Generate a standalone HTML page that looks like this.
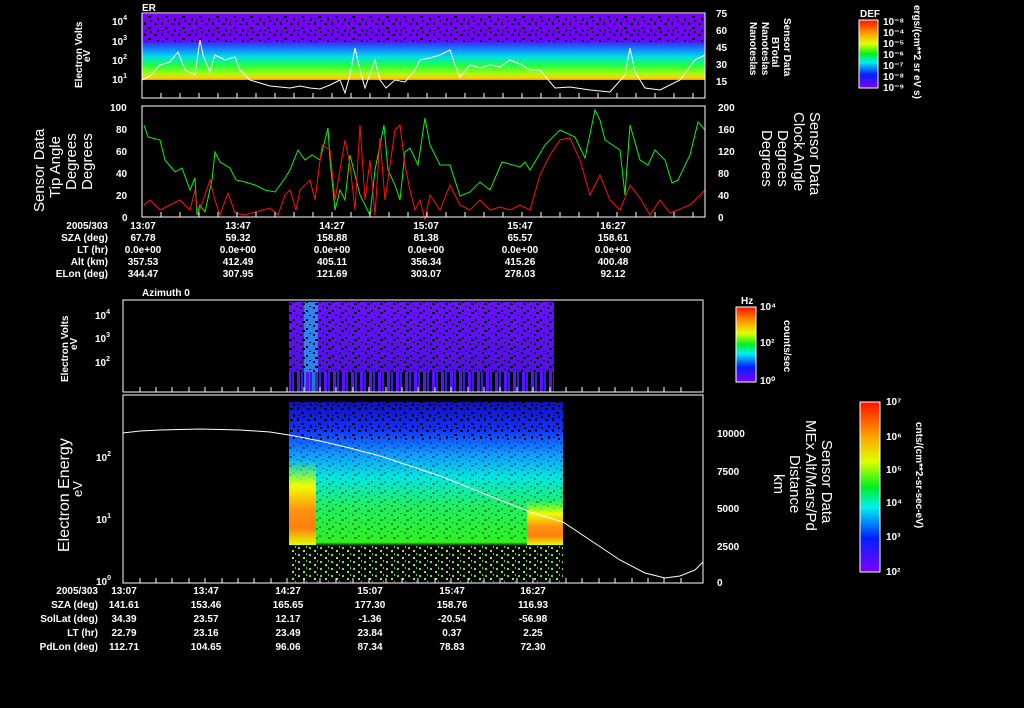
<!DOCTYPE html>
<html><head><meta charset="utf-8"><style>
html,body{margin:0;padding:0;background:#000;width:1024px;height:708px;overflow:hidden}
svg{display:block}
text{font-family:"Liberation Sans",sans-serif;fill:#fff}
.s{font-size:10px;font-weight:bold}
</style></head><body>
<svg width="1024" height="708" viewBox="0 0 1024 708" xmlns="http://www.w3.org/2000/svg">
<defs>
<linearGradient id="g1" x1="0" y1="0" x2="0" y2="1">
<stop offset="0" stop-color="#7a00ff"/><stop offset="0.40" stop-color="#7000ff"/>
<stop offset="0.45" stop-color="#2a40ff"/><stop offset="0.55" stop-color="#1090ff"/>
<stop offset="0.65" stop-color="#00e0e0"/><stop offset="0.78" stop-color="#20ff40"/>
<stop offset="0.9" stop-color="#a0ff10"/><stop offset="0.97" stop-color="#ffd000"/><stop offset="1" stop-color="#ff9000"/>
</linearGradient>
<linearGradient id="g4" x1="0" y1="0" x2="0" y2="1">
<stop offset="0" stop-color="#1010c0"/><stop offset="0.15" stop-color="#1030ff"/>
<stop offset="0.3" stop-color="#10a0ff"/><stop offset="0.42" stop-color="#00e8e0"/>
<stop offset="0.58" stop-color="#20f060"/><stop offset="0.78" stop-color="#30f020"/>
<stop offset="0.8" stop-color="#000"/><stop offset="1" stop-color="#000"/>
</linearGradient>
<linearGradient id="go" x1="0" y1="0" x2="0" y2="1">
<stop offset="0" stop-color="#80ff20" stop-opacity="0"/><stop offset="0.3" stop-color="#f0ff00"/>
<stop offset="0.6" stop-color="#ff9010"/><stop offset="0.8" stop-color="#ff8010"/><stop offset="1" stop-color="#e0ff00"/>
</linearGradient>
<linearGradient id="g3" x1="0" y1="0" x2="0" y2="1">
<stop offset="0" stop-color="#6a10ff"/><stop offset="1" stop-color="#5010e0"/>
</linearGradient>
<linearGradient id="cb" x1="0" y1="0" x2="0" y2="1">
<stop offset="0" stop-color="#ff1000"/><stop offset="0.2" stop-color="#ffa000"/>
<stop offset="0.35" stop-color="#e0ff00"/><stop offset="0.5" stop-color="#00f020"/>
<stop offset="0.62" stop-color="#00f0f0"/><stop offset="0.8" stop-color="#0020ff"/><stop offset="1" stop-color="#8000ff"/>
</linearGradient>
<pattern id="nz" width="17" height="11" patternUnits="userSpaceOnUse">
<rect x="1" y="1" width="3" height="2" fill="#000"/><rect x="8" y="0" width="2" height="3" fill="#000"/>
<rect x="12" y="5" width="3" height="2" fill="#000"/><rect x="4" y="7" width="2" height="3" fill="#000"/>
<rect x="14" y="9" width="2" height="2" fill="#000"/><rect x="9" y="8" width="2" height="1" fill="#000"/>
</pattern>
<pattern id="nz2" width="13" height="9" patternUnits="userSpaceOnUse">
<rect x="1" y="1" width="2" height="2" fill="#000"/><rect x="7" y="4" width="2" height="2" fill="#000"/>
<rect x="10" y="0" width="2" height="1" fill="#000"/><rect x="3" y="6" width="3" height="2" fill="#000"/>
</pattern>
<pattern id="gs" width="11" height="7" patternUnits="userSpaceOnUse">
<rect x="1" y="1" width="2" height="2" fill="#60f020"/><rect x="6" y="4" width="2" height="2" fill="#a0f020"/>
<rect x="9" y="0" width="1" height="2" fill="#40e030"/>
</pattern>
<pattern id="st" width="9" height="20" patternUnits="userSpaceOnUse">
<rect x="0" y="0" width="3" height="20" fill="#6010ff"/><rect x="4" y="0" width="2" height="20" fill="#3020f0"/>
</pattern>
</defs>

<!-- Panel 1 -->
<rect x="142" y="14" width="563" height="66" fill="url(#g1)"/>
<rect x="142" y="14" width="563" height="28" fill="url(#nz)"/>
<polyline fill="none" stroke="#fff" stroke-width="1" points="142,80 150,76 160,65 170,62 178,52 185,70 195,75 200,40 203,55 210,72 215,55 225,60 235,57 240,70 250,80 260,83 270,86 280,87 290,88 300,86 310,88 320,89 330,85 340,80 345,93 350,75 355,48 360,70 365,88 375,60 380,80 386,88 395,80 405,82 415,70 420,60 430,58 440,55 450,50 455,65 460,77 470,65 480,68 490,65 500,67 510,60 520,64 530,70 540,70 555,88 570,87 590,90 610,92 625,75 630,48 635,72 645,88 660,90 680,80 695,60 705,55"/>
<rect x="142" y="13" width="563" height="85" fill="none" stroke="#fff"/>
<path stroke="#fff" fill="none" d="M161,98v-5M180,98v-5M199,98v-5M218,98v-5M237,98v-5M256,98v-5M275,98v-5M294,98v-5M313,98v-5M332,98v-5M351,98v-5M370,98v-5M389,98v-5M408,98v-5M427,98v-5M446,98v-5M465,98v-5M484,98v-5M503,98v-5M522,98v-5M541,98v-5M560,98v-5M579,98v-5M598,98v-5M617,98v-5M636,98v-5M655,98v-5M674,98v-5M693,98v-5"/>
<text x="142" y="11" class="s">ER</text>
<g class="s" font-size="10"><text x="112" y="25">10<tspan font-size="7" dy="-5">4</tspan></text><text x="112" y="45">10<tspan font-size="7" dy="-5">3</tspan></text><text x="112" y="64">10<tspan font-size="7" dy="-5">2</tspan></text><text x="112" y="83">10<tspan font-size="7" dy="-5">1</tspan></text></g>
<text transform="translate(82,88) rotate(-90)" class="s" font-size="9">Electron Volts</text>
<text transform="translate(90,62) rotate(-90)" class="s" font-size="9">eV</text>
<g class="s" font-size="12"><text x="716" y="17">75</text><text x="716" y="34">60</text><text x="716" y="51">45</text><text x="716" y="68">30</text><text x="716" y="85">15</text></g>
<g class="s" font-size="11" font-family="Liberation Mono"><text transform="translate(784,18) rotate(90)">Sensor Data</text><text transform="translate(772,37) rotate(90)">BTotal</text><text transform="translate(762,22) rotate(90)">Nanoteslas</text><text transform="translate(750,22) rotate(90)">Nanoteslas</text></g>
<rect x="859" y="20" width="19" height="68" fill="url(#cb)" stroke="#fff"/>
<text x="860" y="17" class="s" font-size="8">DEF</text>
<g class="s" font-size="7"><text x="883" y="25">10⁻⁸</text><text x="883" y="36">10⁻⁴</text><text x="883" y="47">10⁻⁵</text><text x="883" y="58">10⁻⁶</text><text x="883" y="69">10⁻⁷</text><text x="883" y="80">10⁻⁸</text><text x="883" y="91">10⁻⁹</text></g>
<text transform="translate(914,5) rotate(90)" class="s" font-size="8">ergs/(cm**2 sr eV s)</text>

<!-- Panel 2 -->
<polyline fill="none" stroke="#10f010" stroke-width="1" points="144,125 148,137 160,140 165,160 175,172 182,168 190,190 195,178 197,215 200,205 205,212 212,180 215,152 220,162 230,168 236,180 245,182 255,185 265,190 275,192 285,178 290,170 298,150 305,160 312,155 320,160 328,128 330,160 335,210 340,190 345,200 350,155 355,175 360,195 370,215 375,170 384,125 388,170 395,185 400,200 405,152 410,148 418,165 425,118 430,145 440,165 450,165 460,196 470,192 480,182 490,190 502,162 520,167 525,162 530,170 545,145 560,130 575,137 585,158 595,110 600,120 605,140 620,150 625,195 630,125 640,160 648,165 655,150 665,160 672,183 678,180 690,155 698,122 705,130"/>
<polyline fill="none" stroke="#ff1010" stroke-width="1" points="144,205 150,200 160,210 170,205 180,200 190,210 195,190 198,215 205,195 210,180 215,200 220,215 228,193 235,213 245,215 255,212 270,208 278,215 285,195 290,190 296,210 300,190 310,180 315,200 322,145 330,150 335,200 345,140 350,165 355,210 360,125 365,200 370,160 375,215 380,138 385,200 395,130 400,125 405,165 410,190 415,210 420,200 425,220 430,195 440,210 450,185 460,205 470,210 480,200 490,210 500,207 510,210 520,205 530,210 540,175 550,155 560,140 570,138 580,160 590,195 600,175 610,200 620,210 630,185 640,198 650,215 660,200 670,213 690,205 705,190"/>
<rect x="142" y="106" width="563" height="111" fill="none" stroke="#fff"/>
<path stroke="#fff" fill="none" d="M161,217v-5M180,217v-5M199,217v-5M218,217v-5M237,217v-5M256,217v-5M275,217v-5M294,217v-5M313,217v-5M332,217v-5M351,217v-5M370,217v-5M389,217v-5M408,217v-5M427,217v-5M446,217v-5M465,217v-5M484,217v-5M503,217v-5M522,217v-5M541,217v-5M560,217v-5M579,217v-5M598,217v-5M617,217v-5M636,217v-5M655,217v-5M674,217v-5M693,217v-5"/>
<g class="s" font-size="12"><text x="110" y="111">100</text><text x="116" y="133">80</text><text x="116" y="155">60</text><text x="116" y="177">40</text><text x="116" y="199">20</text><text x="122" y="221">0</text></g>
<g class="s" font-size="12"><text x="718" y="111">200</text><text x="718" y="133">160</text><text x="718" y="155">120</text><text x="718" y="177">80</text><text x="718" y="199">40</text><text x="718" y="221">0</text></g>
<g font-size="15" font-family="Liberation Mono"><text transform="translate(44,212) rotate(-90)" fill="#ff1010">Sensor Data</text><text transform="translate(60,198) rotate(-90)" fill="#ff1010">Tip Angle</text><text transform="translate(76,190) rotate(-90)" fill="#ff1010">Degrees</text><text transform="translate(92,190) rotate(-90)" fill="#ff1010">Degrees</text></g>
<g font-size="15" font-family="Liberation Mono"><text transform="translate(810,112) rotate(90)" fill="#10f010">Sensor Data</text><text transform="translate(794,112) rotate(90)" fill="#10f010">Clock Angle</text><text transform="translate(778,130) rotate(90)" fill="#10f010">Degrees</text><text transform="translate(762,130) rotate(90)" fill="#10f010">Degrees</text></g>
<g class="s" font-size="10">
<text x="108" y="229" text-anchor="end">2005/303</text><text x="108" y="241" text-anchor="end">SZA (deg)</text><text x="108" y="253" text-anchor="end">LT (hr)</text><text x="108" y="265" text-anchor="end">Alt (km)</text><text x="108" y="277" text-anchor="end">ELon (deg)</text>
<g text-anchor="middle">
<text x="143" y="229">13:07</text><text x="143" y="241">67.78</text><text x="143" y="253">0.0e+00</text><text x="143" y="265">357.53</text><text x="143" y="277">344.47</text>
<text x="238" y="229">13:47</text><text x="238" y="241">59.32</text><text x="238" y="253">0.0e+00</text><text x="238" y="265">412.49</text><text x="238" y="277">307.95</text>
<text x="332" y="229">14:27</text><text x="332" y="241">158.88</text><text x="332" y="253">0.0e+00</text><text x="332" y="265">405.11</text><text x="332" y="277">121.69</text>
<text x="426" y="229">15:07</text><text x="426" y="241">81.38</text><text x="426" y="253">0.0e+00</text><text x="426" y="265">356.34</text><text x="426" y="277">303.07</text>
<text x="520" y="229">15:47</text><text x="520" y="241">65.57</text><text x="520" y="253">0.0e+00</text><text x="520" y="265">415.26</text><text x="520" y="277">278.03</text>
<text x="613" y="229">16:27</text><text x="613" y="241">158.61</text><text x="613" y="253">0.0e+00</text><text x="613" y="265">400.48</text><text x="613" y="277">92.12</text>
</g></g>

<!-- Panel 3 -->
<text x="142" y="296" class="s">Azimuth 0</text>
<rect x="289" y="302" width="265" height="70" fill="url(#g3)"/>
<rect x="304" y="302" width="14" height="90" fill="#20a0f0" opacity="0.8"/>
<rect x="289" y="372" width="265" height="20" fill="url(#st)"/>
<rect x="289" y="302" width="265" height="70" fill="url(#nz2)"/>
<rect x="123" y="300" width="580" height="92" fill="none" stroke="#fff"/>
<path stroke="#fff" fill="none" d="M140,392v-5M156,392v-5M172,392v-5M189,392v-5M205,392v-5M222,392v-5M238,392v-5M254,392v-5M271,392v-5M287,392v-5M304,392v-5M320,392v-5M336,392v-5M353,392v-5M369,392v-5M386,392v-5M402,392v-5M418,392v-5M435,392v-5M451,392v-5M468,392v-5M484,392v-5M500,392v-5M517,392v-5M533,392v-5M550,392v-5M566,392v-5M582,392v-5M599,392v-5M615,392v-5M632,392v-5M648,392v-5M664,392v-5M681,392v-5"/>
<g class="s" font-size="10"><text x="95" y="319">10<tspan font-size="7" dy="-5">4</tspan></text><text x="95" y="342">10<tspan font-size="7" dy="-5">3</tspan></text><text x="95" y="366">10<tspan font-size="7" dy="-5">2</tspan></text></g>
<text transform="translate(68,382) rotate(-90)" class="s" font-size="9">Electron Volts</text>
<text transform="translate(77,350) rotate(-90)" class="s" font-size="8">eV</text>
<rect x="736" y="307" width="20" height="75" fill="url(#cb)" stroke="#fff"/>
<text x="741" y="304" class="s" font-size="8">Hz</text>
<g class="s" font-size="7"><text x="760" y="310">10⁴</text><text x="760" y="346">10²</text><text x="760" y="384">10⁰</text></g>
<text transform="translate(784,320) rotate(90)" class="s" font-size="8">counts/sec</text>

<!-- Panel 4 -->
<rect x="289" y="402" width="274" height="180" fill="url(#g4)"/>
<rect x="289" y="402" width="274" height="38" fill="url(#nz)"/>
<rect x="289" y="440" width="274" height="100" fill="url(#nz2)" opacity="0.35"/>
<rect x="289" y="460" width="27" height="85" fill="url(#go)"/>
<rect x="527" y="500" width="36" height="45" fill="url(#go)"/>
<rect x="289" y="546" width="274" height="36" fill="url(#gs)"/>
<polyline fill="none" stroke="#fff" stroke-width="1" points="123,433 140,431 160,430 200,429 240,430 270,432 289,435 320,441 350,448 380,456 410,466 440,476 470,488 500,500 530,512 563,522 590,540 620,560 645,573 665,578 680,576 695,570 703,562"/>
<rect x="123" y="395" width="580" height="188" fill="none" stroke="#fff"/>
<path stroke="#fff" fill="none" d="M140,583v-5M156,583v-5M172,583v-5M189,583v-5M205,583v-5M222,583v-5M238,583v-5M254,583v-5M271,583v-5M287,583v-5M304,583v-5M320,583v-5M336,583v-5M353,583v-5M369,583v-5M386,583v-5M402,583v-5M418,583v-5M435,583v-5M451,583v-5M468,583v-5M484,583v-5M500,583v-5M517,583v-5M533,583v-5M550,583v-5M566,583v-5M582,583v-5M599,583v-5M615,583v-5M632,583v-5M648,583v-5M664,583v-5M681,583v-5"/>
<g class="s" font-size="11"><text x="96" y="461">10<tspan font-size="7" dy="-5">2</tspan></text><text x="96" y="523">10<tspan font-size="7" dy="-5">1</tspan></text><text x="96" y="585">10<tspan font-size="7" dy="-5">0</tspan></text></g>
<text transform="translate(69,552) rotate(-90)" font-size="16">Electron Energy</text>
<text transform="translate(82,497) rotate(-90)" font-size="13">eV</text>
<g class="s" font-size="12"><text x="717" y="437">10000</text><text x="717" y="475">7500</text><text x="717" y="512">5000</text><text x="717" y="550">2500</text><text x="717" y="586">0</text></g>
<g font-size="15"><text transform="translate(822,440) rotate(90)">Sensor Data</text><text transform="translate(806,420) rotate(90)">MEx Alt/Mars/Pd</text><text transform="translate(790,455) rotate(90)">Distance</text><text transform="translate(774,474) rotate(90)">km</text></g>
<rect x="860" y="402" width="20" height="170" fill="url(#cb)" stroke="#fff"/>
<g class="s" font-size="7"><text x="886" y="405">10⁷</text><text x="886" y="440">10⁶</text><text x="886" y="473">10⁵</text><text x="886" y="506">10⁴</text><text x="886" y="540">10³</text><text x="886" y="575">10²</text></g>
<text transform="translate(916,422) rotate(90)" class="s" font-size="9">cnts/(cm**2-sr-sec-eV)</text>
<g class="s" font-size="11">
<text x="98" y="594" text-anchor="end">2005/303</text><text x="98" y="608" text-anchor="end">SZA (deg)</text><text x="98" y="622" text-anchor="end">SolLat (deg)</text><text x="98" y="636" text-anchor="end">LT (hr)</text><text x="98" y="650" text-anchor="end">PdLon (deg)</text>
<g text-anchor="middle">
<text x="124" y="594">13:07</text><text x="124" y="608">141.61</text><text x="124" y="622">34.39</text><text x="124" y="636">22.79</text><text x="124" y="650">112.71</text>
<text x="206" y="594">13:47</text><text x="206" y="608">153.46</text><text x="206" y="622">23.57</text><text x="206" y="636">23.16</text><text x="206" y="650">104.65</text>
<text x="288" y="594">14:27</text><text x="288" y="608">165.65</text><text x="288" y="622">12.17</text><text x="288" y="636">23.49</text><text x="288" y="650">96.06</text>
<text x="370" y="594">15:07</text><text x="370" y="608">177.30</text><text x="370" y="622">-1.36</text><text x="370" y="636">23.84</text><text x="370" y="650">87.34</text>
<text x="452" y="594">15:47</text><text x="452" y="608">158.76</text><text x="452" y="622">-20.54</text><text x="452" y="636">0.37</text><text x="452" y="650">78.83</text>
<text x="533" y="594">16:27</text><text x="533" y="608">116.93</text><text x="533" y="622">-56.98</text><text x="533" y="636">2.25</text><text x="533" y="650">72.30</text>
</g></g>
</svg>
</body></html>
